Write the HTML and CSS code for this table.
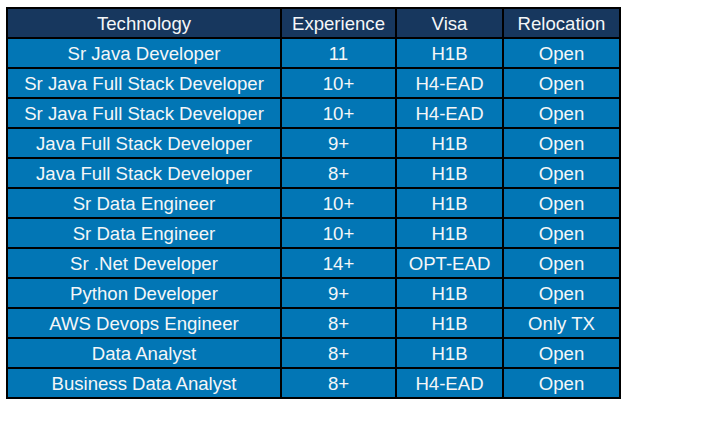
FILE: index.html
```html
<!DOCTYPE html>
<html>
<head>
<meta charset="utf-8">
<link rel="stylesheet" href="styles.css">
</head>
<body>
<table class="hotlist">
  <colgroup>
    <col class="c-tech"><col class="c-exp"><col class="c-visa"><col class="c-rel">
  </colgroup>
  <thead>
    <tr><th>Technology</th><th>Experience</th><th>Visa</th><th>Relocation</th></tr>
  </thead>
  <tbody>
    <tr><td>Sr Java Developer</td><td>11</td><td>H1B</td><td>Open</td></tr>
    <tr><td>Sr Java Full Stack Developer</td><td>10+</td><td>H4-EAD</td><td>Open</td></tr>
    <tr><td>Sr Java Full Stack Developer</td><td>10+</td><td>H4-EAD</td><td>Open</td></tr>
    <tr><td>Java Full Stack Developer</td><td>9+</td><td>H1B</td><td>Open</td></tr>
    <tr><td>Java Full Stack Developer</td><td>8+</td><td>H1B</td><td>Open</td></tr>
    <tr><td>Sr Data Engineer</td><td>10+</td><td>H1B</td><td>Open</td></tr>
    <tr><td>Sr Data Engineer</td><td>10+</td><td>H1B</td><td>Open</td></tr>
    <tr><td>Sr .Net Developer</td><td>14+</td><td>OPT-EAD</td><td>Open</td></tr>
    <tr><td>Python Developer</td><td>9+</td><td>H1B</td><td>Open</td></tr>
    <tr><td>AWS Devops Engineer</td><td>8+</td><td>H1B</td><td>Only TX</td></tr>
    <tr><td>Data Analyst</td><td>8+</td><td>H1B</td><td>Open</td></tr>
    <tr><td>Business Data Analyst</td><td>8+</td><td>H4-EAD</td><td>Open</td></tr>
  </tbody>
</table>
</body>
</html>
```
FILE: styles.css
```css
html, body {
  margin: 0;
  padding: 0;
  background: #ffffff;
}
body {
  padding: 7px 0 0 6px;
  font-family: "Liberation Sans", Arial, sans-serif;
}
.hotlist {
  border-collapse: separate;
  border-spacing: 0;
  border-left: 2px solid #000;
  border-top: 2px solid #000;
  table-layout: fixed;
  width: 615px;
}
.c-tech { width: 274px; }
.c-exp { width: 115px; }
.c-visa { width: 107px; }
.c-rel { width: 117px; }
.hotlist th,
.hotlist td {
  height: 27px;
  padding: 1px 0 0;
  border-right: 2px solid #000;
  border-bottom: 2px solid #000;
  text-align: center;
  vertical-align: middle;
  color: #f4f6f8;
  font-size: 18.6px;
  font-weight: normal;
  line-height: 20px;
  box-sizing: content-box;
}
.hotlist th {
  background: #17375e;
}
.hotlist td {
  background: #0276b5;
}
```
